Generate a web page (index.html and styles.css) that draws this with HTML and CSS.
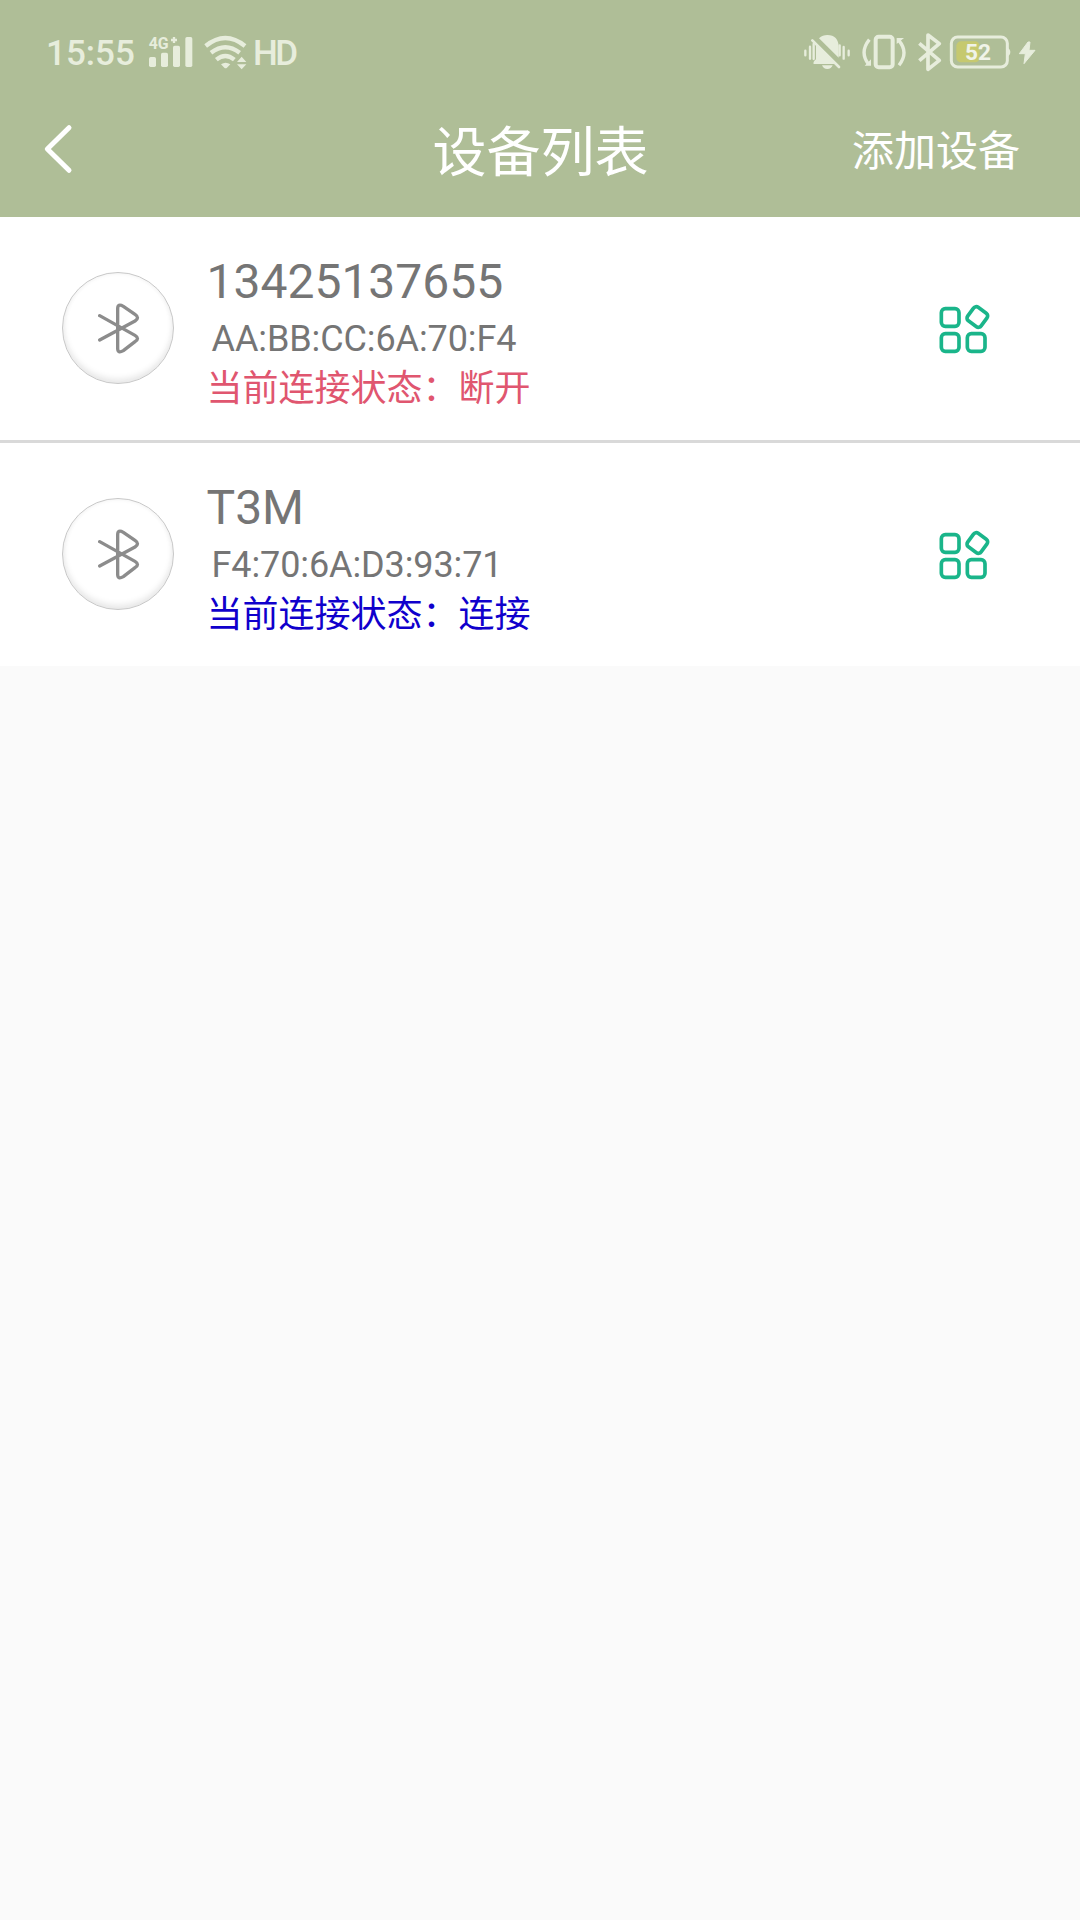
FILE: index.html
```html
<!DOCTYPE html>
<html lang="zh-CN">
<head>
<meta charset="utf-8">
<title>设备列表</title>
<link rel="stylesheet" href="styles.css">
</head>
<body>
<svg class="symbols" aria-hidden="true">
  <symbol id="bluetooth" viewBox="0 0 126 153">
    <path d="M5 38L111 97Q126 106 111 116L76 143Q59 153 59 136V18Q59 0 76 10L111 34Q126 44 111 54L5 111" fill="none" stroke="#8c8c8c" stroke-width="10" stroke-linecap="round" stroke-linejoin="round"/>
  </symbol>
  <symbol id="apps" viewBox="0 0 156 150">
    <g fill="none" stroke="#1ab58a" stroke-width="11">
      <rect x="7" y="14" width="53" height="53" rx="12"/>
      <rect x="7" y="89" width="53" height="53" rx="12"/>
      <rect x="85" y="89" width="53" height="53" rx="12"/>
      <rect x="90" y="14" width="50" height="50" rx="10" transform="rotate(36 115 39)"/>
    </g>
  </symbol>
</svg>
<header class="header">
  <div class="status-bar">
    <div class="status-group">
      <span class="time">15:55</span>
      <svg class="signal" viewBox="354 0 138 195">
        <text x="356" y="87" class="network" textLength="60" lengthAdjust="spacingAndGlyphs">4G</text>
        <path d="M423 60h18M432 51v18" stroke="#e7eddc" stroke-width="7"/>
        <g fill="#e7eddc">
          <rect x="357" y="111" width="21" height="30" rx="5"/>
          <rect x="393" y="98" width="21" height="43" rx="5"/>
          <rect x="429" y="77" width="21" height="64" rx="5"/>
          <rect x="466" y="51" width="21" height="90" rx="5"/>
        </g>
      </svg>
      <svg class="wifi" viewBox="519 0 138 195">
        <g fill="none" stroke="#e7eddc" stroke-width="13">
          <path d="M527 78Q586 30 645 78"/>
          <path d="M543 98Q586 65 629 98"/>
          <path d="M559 119Q586 97 613 119"/>
        </g>
        <path d="M573 133Q587 123 601 133L591 143Q587 147 583 143Z" fill="#e7eddc"/>
        <path d="M621 126L635 110L649 126ZM621 133H649L635 148Z" fill="#e7eddc"/>
      </svg>
      <span class="hd">HD</span>
    </div>
    <div class="status-group">
      <svg class="muted" viewBox="39 0 144 195">
        <path d="M46 92v14M60 80v36M161 81v35M176 92v14M149 76v30M71 72v45" stroke="#e7eddc" stroke-width="7" stroke-linecap="round"/>
        <path d="M87 55Q98 45 112 45Q145 46 146 80V113ZM78 71L141 132H71Q68 126 78 118ZM96 136H128Q124 147 112 147Q100 147 96 136Z" fill="#e7eddc"/>
        <path d="M67 61L147 141" stroke="#e7eddc" stroke-width="8" stroke-linecap="round"/>
        <path d="M76 57L152 133" stroke="#afbe97" stroke-width="5"/>
      </svg>
      <svg class="vibrate" viewBox="213 0 138 195">
        <rect x="257" y="50" width="51" height="92" rx="9" fill="none" stroke="#e7eddc" stroke-width="12"/>
        <path d="M238 59Q208 96 235 132M327 62Q357 98 327 136" fill="none" stroke="#e7eddc" stroke-width="10"/>
        <path d="M224 137L243 118V137ZM320 72V54H342Z" fill="#e7eddc"/>
      </svg>
      <svg class="bluetooth-small" viewBox="381 0 78 195">
        <path d="M388 70L448 121L414 148V45L448 71L388 122" fill="none" stroke="#e7eddc" stroke-width="11" stroke-linejoin="round"/>
      </svg>
      <svg class="battery" viewBox="477 0 186 195">
        <rect x="499" y="64" width="70" height="63" rx="14" fill="#c6c96f"/>
        <rect x="484" y="51" width="168" height="90" rx="19" fill="none" stroke="#e7eddc" stroke-width="9"/>
        <path d="M652 83Q661 87 661 96Q661 106 652 109Z" fill="#e7eddc"/>
        <text x="564" y="120" class="percent">52</text>
      </svg>
      <svg class="charging" viewBox="681 0 60 195">
        <path d="M714 66L688 101H706L702 131L735 91H717L720 66Z" fill="#e7eddc" stroke="#e7eddc" stroke-width="3" stroke-linejoin="round"/>
      </svg>
    </div>
  </div>
  <nav class="nav">
    <svg class="back" viewBox="0 0 90 156"><path d="M78 14L13 78L78 142" fill="none" stroke="#fff" stroke-width="15" stroke-linecap="round" stroke-linejoin="round"/></svg>
    <h1 class="title">设备列表</h1>
    <span class="add">添加设备</span>
  </nav>
</header>
<main class="devices">
  <section class="device">
    <div class="avatar"><svg class="glyph"><use href="#bluetooth"/></svg></div>
    <div class="info">
      <div class="name">13425137655</div>
      <div class="mac">AA:BB:CC:6A:70:F4</div>
      <div class="state disconnected">当前连接状态：断开</div>
    </div>
    <svg class="apps"><use href="#apps"/></svg>
  </section>
  <section class="device">
    <div class="avatar"><svg class="glyph"><use href="#bluetooth"/></svg></div>
    <div class="info">
      <div class="name">T3M</div>
      <div class="mac">F4:70:6A:D3:93:71</div>
      <div class="state connected">当前连接状态：连接</div>
    </div>
    <svg class="apps"><use href="#apps"/></svg>
  </section>
</main>
</body>
</html>
```
FILE: styles.css
```css
* { box-sizing: border-box; }
body {
  margin: 0;
  min-height: 1920px;
  background: #fafafa;
  font-family: Roboto, "Noto Sans CJK SC", sans-serif;
}
svg { display: block; flex: none; }
.symbols { width: 0; height: 0; position: absolute; }

.header { height: 217px; background: #afbe97; color: #fff; }
.status-bar {
  height: 85px;
  padding: 20px 43px 0 46px;
  display: flex;
  justify-content: space-between;
  color: #e7eddc;
}
.status-group { display: flex; height: 65px; }
.status-group svg { height: 65px; }
.time, .hd { font-size: 35px; line-height: 68px; white-space: nowrap; }
.time { width: 102px; font-weight: 500; }
.hd { margin-left: 4px; letter-spacing: -2.5px; font-weight: 500; }
.signal { width: 46px; }
.network { font: 700 48px Roboto, sans-serif; fill: #e7eddc; }
.wifi { width: 46px; margin-left: 9px; }
.muted { width: 48px; }
.vibrate { width: 46px; margin-left: 10px; }
.bluetooth-small { width: 26px; margin-left: 10px; }
.battery { width: 62px; margin-left: 6px; }
.percent { font: 700 68px Roboto, sans-serif; fill: #f0f3e8; text-anchor: middle; }
.charging { width: 20px; margin-left: 6px; }

.nav {
  height: 128px;
  padding: 0 60px 0 43px;
  display: grid;
  grid-template-columns: 1fr auto 1fr;
  align-items: center;
}
.back { width: 30px; height: 52px; }
.title { margin: 10px 0 0 18px; font-size: 54px; font-weight: 400; line-height: 80px; }
.add { justify-self: end; margin-top: 6px; font-size: 42px; line-height: 62px; }

.devices { background: #fff; }
.device { height: 223px; padding: 0 89px 0 62px; display: flex; align-items: center; }
.device + .device { height: 226px; border-top: 3px solid #d9d9d9; }
.avatar {
  width: 112px;
  height: 112px;
  margin-bottom: 2px;
  border: 1px solid #c8c8c8;
  border-radius: 50%;
  display: grid;
  place-items: center;
  box-shadow: inset 0 -4px 6px #e8e8e8, inset 0 0 5px #f2f2f2;
}
.glyph { width: 42px; height: 51px; margin: 2px 0 0 1px; }
.info { flex: 1; padding: 9px 0 0 32.5px; color: #757575; }
.name { font-size: 48px; line-height: 60px; }
.mac { margin-top: 5px; padding-left: 5px; font-size: 36px; letter-spacing: -0.1px; line-height: 44px; }
.state { margin-top: 2px; font-size: 36px; line-height: 52px; }
.disconnected { color: #e0566f; }
.connected { color: #1000cc; }
.apps { width: 52px; height: 50px; }
```
